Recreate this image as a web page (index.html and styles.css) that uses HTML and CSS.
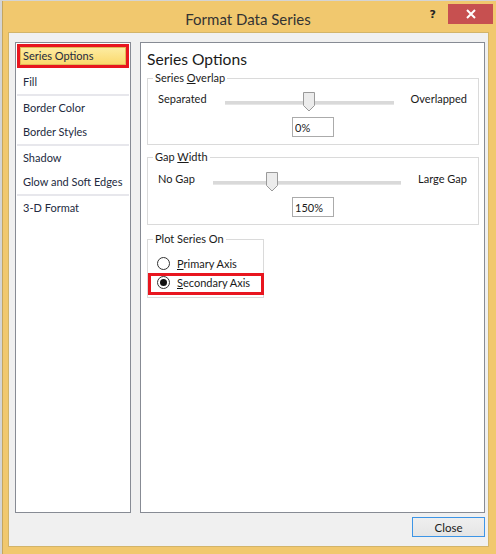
FILE: index.html
```html
<!DOCTYPE html>
<html>
<head>
<meta charset="utf-8">
<link rel="stylesheet" href="styles.css">
</head>
<body>
<div class="window">
  <div class="titlebar">
    <div></div>
    <div class="title">Format Data Series</div>
    <div class="controls">
      <span class="help">?</span>
      <span class="close-x"><svg width="10" height="10" viewBox="0 0 10 10"><path d="M1 1L9 9M9 1L1 9" stroke="#fff" stroke-width="2"/></svg></span>
    </div>
  </div>
  <div class="client">
    <div class="main">
      <ul class="nav">
        <li class="item selected">Series Options</li>
        <li class="divider blank"></li>
        <li class="item">Fill</li>
        <li class="divider"></li>
        <li class="item">Border Color</li>
        <li class="item">Border Styles</li>
        <li class="divider"></li>
        <li class="item">Shadow</li>
        <li class="item">Glow and Soft Edges</li>
        <li class="divider"></li>
        <li class="item">3-D Format</li>
      </ul>
      <div class="panel">
        <div class="heading">Series Options</div>
        <fieldset class="group">
          <legend>Series <u>O</u>verlap</legend>
          <div class="slider-row first">
            <span class="lbl">Separated</span>
            <div class="track"><span class="thumb" style="left:50%"><svg width="12" height="20" viewBox="0 0 12 20"><polygon points="0.5,0.5 11.5,0.5 11.5,13.5 6,19 0.5,13.5" fill="#ececec" stroke="#9a9a9a"/></svg></span></div>
            <span class="lbl">Overlapped</span>
          </div>
          <div class="value-row"><input class="value" type="text" value="0%" readonly></div>
        </fieldset>
        <fieldset class="group gap">
          <legend>Gap <u>W</u>idth</legend>
          <div class="slider-row">
            <span class="lbl">No Gap</span>
            <div class="track"><span class="thumb" style="left:31.5%"><svg width="12" height="20" viewBox="0 0 12 20"><polygon points="0.5,0.5 11.5,0.5 11.5,13.5 6,19 0.5,13.5" fill="#ececec" stroke="#9a9a9a"/></svg></span></div>
            <span class="lbl">Large Gap</span>
          </div>
          <div class="value-row"><input class="value" type="text" value="150%" readonly></div>
        </fieldset>
        <fieldset class="group plot">
          <legend>Plot Series On</legend>
          <label class="radio-row"><span class="radio"></span><span><u>P</u>rimary Axis</span></label>
          <label class="radio-row marked"><span class="radio checked"></span><span><u>S</u>econdary Axis</span></label>
        </fieldset>
      </div>
    </div>
    <div class="footer">
      <button class="btn">Close</button>
    </div>
  </div>
</div>
</body>
</html>
```
FILE: styles.css
```css
* { box-sizing: border-box; }
html, body { margin: 0; padding: 0; }
body {
  background: #d4d4d4;
  padding: 1px 0 0 2px;
  font-family: Lato, "Noto Sans", "Liberation Sans", sans-serif;
  font-size: 11px;
  color: #1a1a1a;
}
.window {
  width: 494px;
  height: 553px;
  background: #f1c86e;
  border-left: 1px solid #c6a65c;
}
.titlebar {
  height: 31px;
  display: grid;
  grid-template-columns: 1fr auto 1fr;
  align-items: start;
}
.title {
  font-size: 15px;
  line-height: 20px;
  padding-top: 8px;
  color: #333;
  padding-right: 3px;
}
.controls {
  display: flex;
  justify-content: flex-end;
  align-items: flex-start;
  padding-right: 3px;
}
.help {
  font-family: "DejaVu Sans", sans-serif;
  font-weight: bold;
  font-size: 11px;
  line-height: 12px;
  margin-top: 8px;
  margin-right: 12px;
  color: #222;
}
.close-x {
  width: 45px;
  height: 20px;
  margin-top: 3px;
  background: #c75050;
  display: flex;
  align-items: center;
  justify-content: center;
}
.close-x svg { display: block; }
.client {
  margin-left: 5px;
  width: 481px;
  height: 515px;
  background: #f0f0f0;
  border: 1px solid #d2b469;
  padding: 9px 3px 0 6px;
}
.main {
  display: grid;
  grid-template-columns: 116px 345px;
  column-gap: 9px;
  height: 471px;
}
.nav {
  list-style: none;
  margin: 0;
  padding: 1px;
  background: #fff;
  border: 1px solid #878b94;
  color: #232a40;
}
.item {
  height: 24px;
  line-height: 18px;
  border: 3px solid transparent;
  padding-left: 3px;
  white-space: nowrap;
}
.item.selected {
  border-color: #e8161f;
  background: linear-gradient(#fdeda4, #fbd86a);
  box-shadow: inset 0 0 0 1px #e2b957;
}
.divider { height: 2px; background: #e7e7ec; }
.divider.blank { background: transparent; }
.panel {
  background: #fff;
  border: 1px solid #878b94;
  padding: 6px 5px 0 6px;
}
.heading {
  font-size: 15.6px;
  line-height: 20px;
  height: 20px;
  margin-bottom: 1px;
}
.group {
  margin: 0;
  padding: 0 0 7px;
  border: 1px solid #dadada;
  min-width: 0;
}
.group legend {
  margin-left: 5px;
  padding: 0 2px;
  line-height: 16px;
}
.group.gap { margin-top: 4px; }
.slider-row {
  display: flex;
  height: 20px;
  margin-top: 7px;
  padding: 0 11px 0 10px;
}
.slider-row.first { margin-top: 6px; }
.lbl { line-height: 13px; white-space: nowrap; }
.track {
  flex: 1;
  position: relative;
  margin: 0 17px 0 18px;
}
.track::before {
  content: "";
  position: absolute;
  left: 0; right: 0;
  top: 9px;
  height: 3px;
  background: #d9d9d9;
  border-bottom: 1px solid #e6e6e6;
}
.thumb {
  position: absolute;
  top: 0;
  width: 12px;
  height: 20px;
  margin-left: -6px;
}
.thumb svg { display: block; }
.value-row {
  display: flex;
  justify-content: center;
  margin-top: 5px;
}
.value {
  width: 42px;
  height: 20px;
  border: 1px solid #ababab;
  padding: 0 2px;
  font: inherit;
  color: #1a1a1a;
  background: #fff;
  outline: none;
}
.group.plot {
  width: 117px;
  margin-top: 6px;
  padding: 0 0 2px;
}
.radio-row {
  display: flex;
  align-items: center;
  height: 22px;
  border: 3px solid transparent;
  padding: 0 0 4px 6px;
  margin-right: -1px;
  white-space: nowrap;
}
.radio-row:first-of-type { margin-top: 7px; }
.radio-row.marked { margin-top: -3px; border-color: #e8161f; }
.radio {
  width: 13px;
  height: 13px;
  border-radius: 50%;
  border: 1px solid #333;
  background: #fff;
  margin-right: 7px;
  flex: none;
  display: flex;
  align-items: center;
  justify-content: center;
}
.radio.checked::after {
  content: "";
  width: 7px;
  height: 7px;
  border-radius: 50%;
  background: #111;
}
.footer {
  display: flex;
  justify-content: flex-end;
  margin-top: 4px;
}
.btn {
  width: 73px;
  height: 20px;
  border: 1px solid #3d95e6;
  background: linear-gradient(#efefef, #e5e5e5);
  font: inherit;
  font-size: 11.5px;
  color: #1a1a1a;
  padding: 0;
}
```
